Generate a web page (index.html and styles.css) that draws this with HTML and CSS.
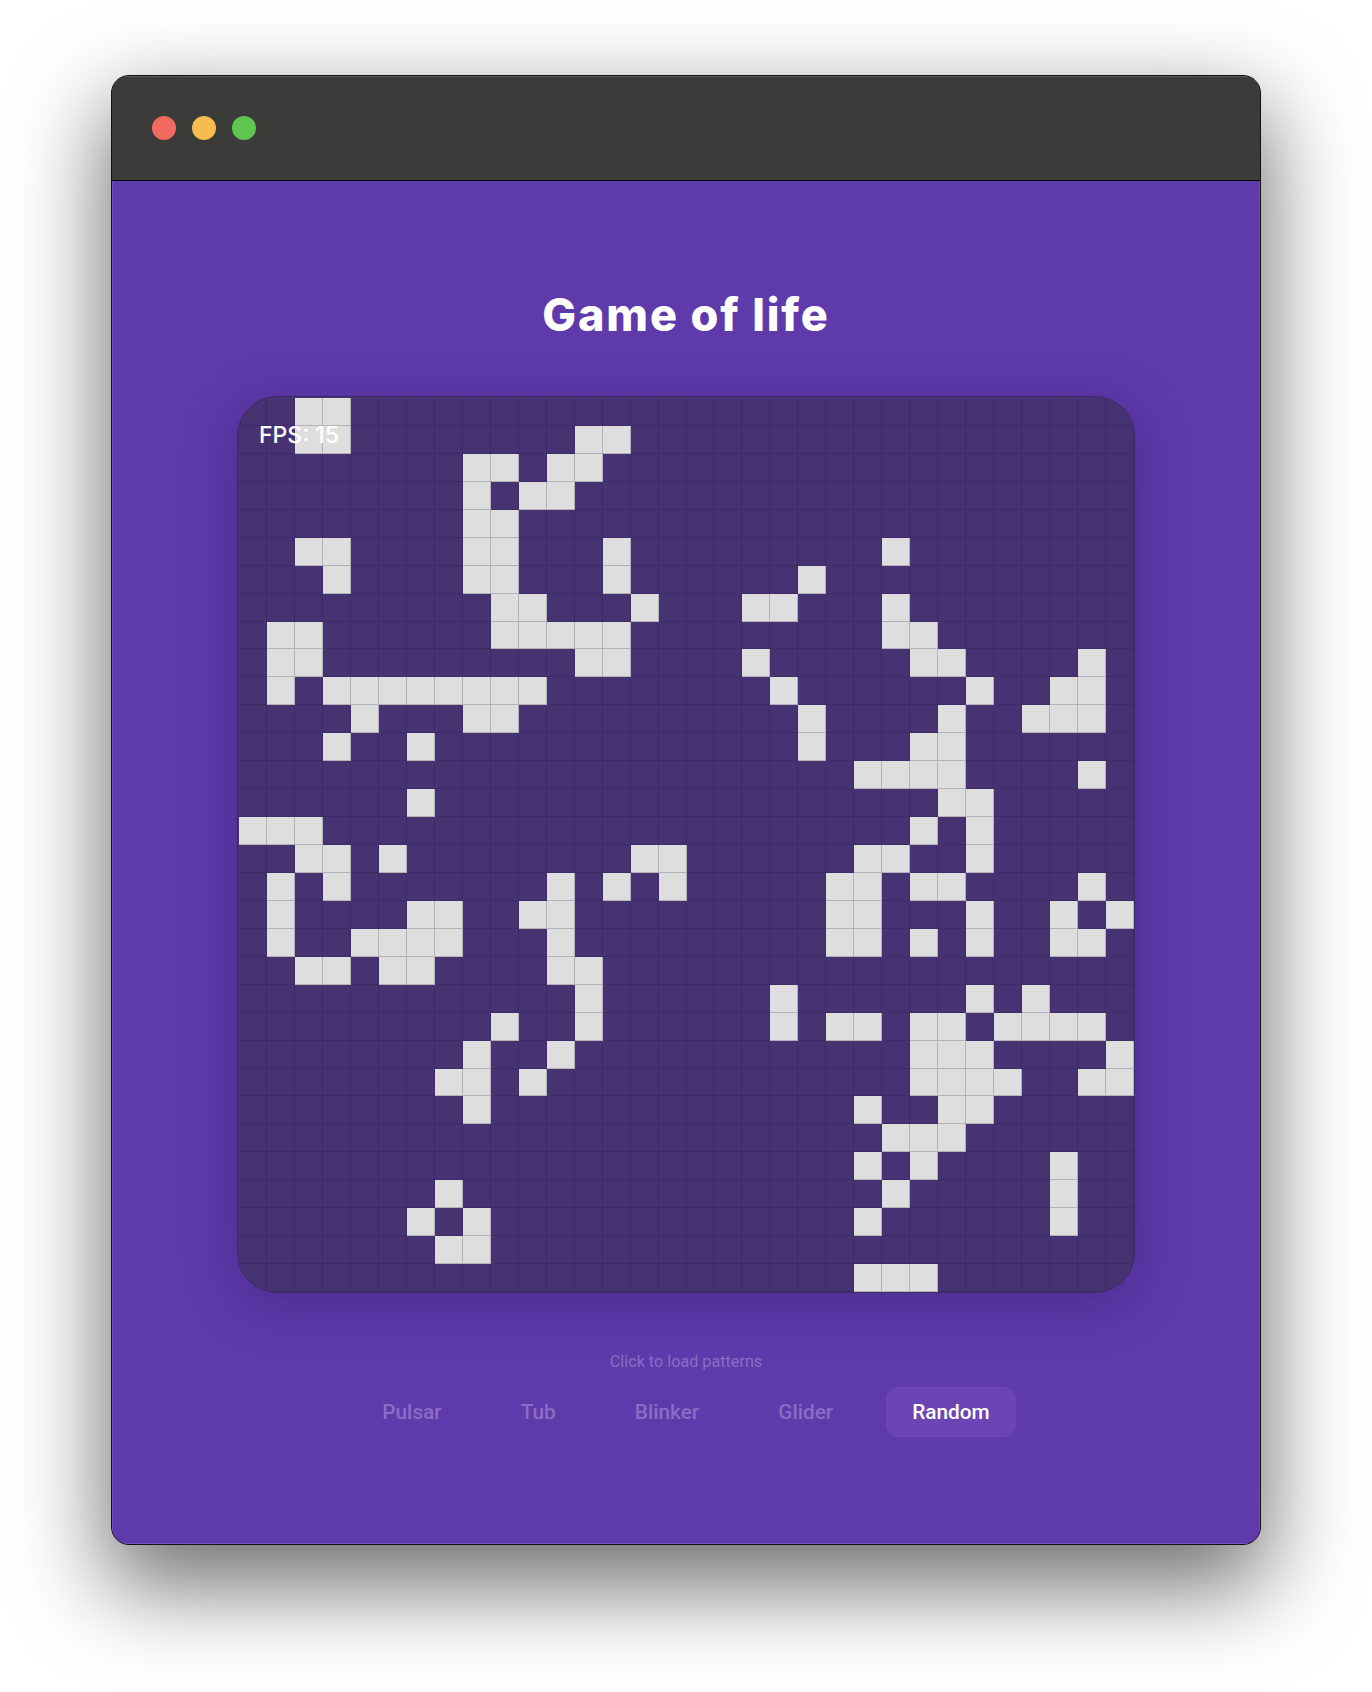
FILE: index.html
```html
<!DOCTYPE html>
<html lang="en">
<head>
<meta charset="utf-8">
<title>Game of life</title>
<link rel="stylesheet" href="styles.css">
</head>
<body>
<div class="window">
  <header class="titlebar">
    <span class="dot dot-red"></span>
    <span class="dot dot-yellow"></span>
    <span class="dot dot-green"></span>
  </header>
  <main class="app">
    <h1 class="title">Game of life</h1>
    <div class="board-wrap">
      <div class="board" id="board"></div>
      <div class="fps">FPS: 15</div>
    </div>
    <p class="hint">Click to load patterns</p>
    <nav class="patterns">
      <button class="pattern">Pulsar</button>
      <button class="pattern">Tub</button>
      <button class="pattern">Blinker</button>
      <button class="pattern">Glider</button>
      <button class="pattern is-active">Random</button>
    </nav>
  </main>
</div>
<script src="board.js"></script>
</body>
</html>
```
FILE: styles.css
```css
* { box-sizing: border-box; }
html, body { margin: 0; background: #fff; }
body { padding: 75px 111px 148px; font-family: "Inter", "Liberation Sans", sans-serif; }
.window {
  width: 1150px;
  height: 1470px;
  border: 1px solid #111;
  border-radius: 18px;
  overflow: hidden;
  display: flex;
  flex-direction: column;
  background: #5f3aab;
  box-shadow: 0 36px 90px 6px rgba(0, 0, 0, 0.56);
}
.titlebar {
  height: 105px;
  flex: none;
  background: #3b3b39;
  border-bottom: 1px solid #000;
  display: flex;
  align-items: center;
  gap: 16px;
  padding: 0 0 0 40px;
  box-shadow: inset 0 1px 0 #5c5c5a;
}
.dot { width: 24px; height: 24px; border-radius: 50%; }
.dot-red { background: #f1695f; }
.dot-yellow { background: #f6bd4e; }
.dot-green { background: #5ec553; }
.app {
  flex: 1;
  display: flex;
  flex-direction: column;
  align-items: center;
  background: #5f3aab;
  box-shadow: inset 0 -1px 0 #7a55c4, inset 1px 0 0 #7050bb, inset -1px 0 0 #7050bb;
}
.title {
  margin: 110px 0 0;
  height: 48px;
  line-height: 48px;
  font-size: 45px;
  font-weight: 800;
  letter-spacing: 1.85px;
  color: #fff;
}
.board-wrap {
  position: relative;
  margin-top: 57px;
  width: 898px;
  height: 897px;
  border-radius: 40px;
  box-shadow: 0 10px 50px rgba(40, 20, 90, 0.35);
}
.board {
  width: 898px;
  height: 897px;
  padding: 1px 0 0 1px;
  border: 1px solid #3b2a63;
  border-radius: 40px;
  overflow: hidden;
  background: #473272;
  display: grid;
  grid-template-columns: repeat(32, 1fr);
  grid-template-rows: repeat(32, 1fr);
}
.cell { border-right: 1px solid #3f2b68; border-bottom: 1px solid #3f2b68; }
.cell.on { background: #dedede; border-color: #b3b1b9; }
.fps {
  position: absolute;
  left: 22px;
  top: 25px;
  font-size: 23px;
  font-weight: 500;
  line-height: 28px;
  color: #fff;
}
.hint {
  margin: 58px 0 0;
  font-family: "Roboto", "Liberation Sans", sans-serif;
  font-size: 16.2px;
  line-height: 22px;
  color: #8a6dc4;
}
.patterns { margin-top: 14px; display: flex; gap: 27px; }
.pattern {
  height: 50px;
  padding: 0 26px;
  border: 0;
  border-radius: 12px;
  background: transparent;
  font-family: "Roboto", "Liberation Sans", sans-serif;
  font-size: 20.8px;
  font-weight: 500;
  color: #8a6dc4;
}
.pattern.is-active { background: #6b45b3; color: #fff; }
```
FILE: board.js
```js
// Live cells of the current generation, one row per string: row index -> live columns.
var LIVE = {
  0: [2,3],
  1: [2,3,12,13],
  2: [8,9,11,12],
  3: [8,10,11],
  4: [8,9],
  5: [2,3,8,9,13,23],
  6: [3,8,9,13,20],
  7: [9,10,14,18,19,23],
  8: [1,2,9,10,11,12,13,23,24],
  9: [1,2,12,13,18,24,25,30],
  10: [1,3,4,5,6,7,8,9,10,19,26,29,30],
  11: [4,8,9,20,25,28,29,30],
  12: [3,6,20,24,25],
  13: [22,23,24,25,30],
  14: [6,25,26],
  15: [0,1,2,24,26],
  16: [2,3,5,14,15,22,23,26],
  17: [1,3,11,13,15,21,22,24,25,30],
  18: [1,6,7,10,11,21,22,26,29,31],
  19: [1,4,5,6,7,11,21,22,24,26,29,30],
  20: [2,3,5,6,11,12],
  21: [12,19,26,28],
  22: [9,12,19,21,22,24,25,27,28,29,30],
  23: [8,11,24,25,26,31],
  24: [7,8,10,24,25,26,27,30,31],
  25: [8,22,25,26],
  26: [23,24,25],
  27: [22,24,29],
  28: [7,23,29],
  29: [6,8,22,29],
  30: [7,8],
  31: [22,23,24]
};
var board = document.getElementById("board");
for (var r = 0; r < 32; r++) {
  for (var c = 0; c < 32; c++) {
    var cell = document.createElement("div");
    cell.className = LIVE[r].indexOf(c) >= 0 ? "cell on" : "cell";
    board.appendChild(cell);
  }
}
```
